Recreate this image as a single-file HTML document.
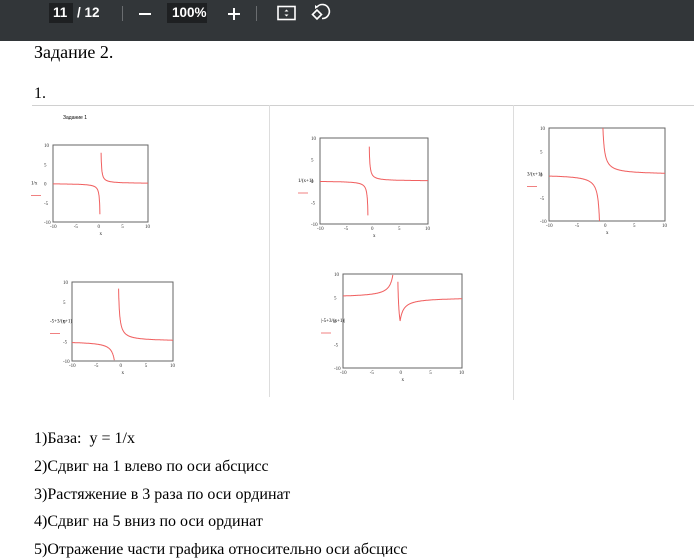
<!DOCTYPE html>
<html><head><meta charset="utf-8"><style>
body{margin:0;width:694px;height:552px;overflow:hidden;background:#fff;position:relative;font-family:"Liberation Serif",serif;}
#bar{position:absolute;left:0;top:0;width:694px;height:41px;background:#323639;}
.t{position:absolute;color:#fff;font-family:"Liberation Sans",sans-serif;font-size:13.5px;font-weight:bold;}
.p{position:absolute;font-size:16px;color:#000;white-space:nowrap;}
</style></head><body>
<div id="bar">
 <div style="position:absolute;left:49px;top:3px;width:24px;height:20px;background:#1e2022"></div>
 <div class="t" style="left:53px;top:5px">11</div>
 <div class="t" style="left:77px;top:5px">/ 12</div>
 <div style="position:absolute;left:122px;top:6px;width:1px;height:15px;background:#6a6d70"></div>
 <div style="position:absolute;left:139px;top:13px;width:12px;height:2px;background:#fff"></div>
 <div style="position:absolute;left:167px;top:3px;width:40px;height:20px;background:#1e2022"></div>
 <div class="t" style="left:172px;top:5px">100%</div>
 <div style="position:absolute;left:228px;top:13px;width:12px;height:2px;background:#fff"></div>
 <div style="position:absolute;left:233px;top:8px;width:2px;height:12px;background:#fff"></div>
 <div style="position:absolute;left:256px;top:6px;width:1px;height:15px;background:#6a6d70"></div>
 <svg style="position:absolute;left:276px;top:3px" width="60" height="22" viewBox="0 0 60 22">
  <rect x="2" y="3.5" width="17" height="13" fill="none" stroke="#fff" stroke-width="1.6"/>
  <path d="M10.5 6.5l-2 2h4zM10.5 13.5l-2-2h4z" fill="#fff"/>
  <path d="M41 7l-4.5 4.5 4.5 4.5 4.5-4.5z" fill="none" stroke="#fff" stroke-width="1.6"/>
  <path d="M41 4a7 7 0 1 1 5 11.5" fill="none" stroke="#fff" stroke-width="1.6"/>
  <path d="M39 2l3 2-3 2z" fill="#fff"/>
 </svg>
</div>
<div class="p" style="left:34px;top:42px;font-size:18px">Задание 2.</div>
<div class="p" style="left:34px;top:85px">1.</div>
<svg id="g" style="position:absolute;left:0;top:0" width="694" height="552">
 <line x1="32" y1="105.5" x2="694" y2="105.5" stroke="#d0d0d0"/>
 <line x1="269.5" y1="105" x2="269.5" y2="397" stroke="#ddd"/>
 <line x1="513.5" y1="105" x2="513.5" y2="400" stroke="#ddd"/>
 <text x="63" y="119" font-size="5" font-family="Liberation Sans">Задание 1</text>
</svg>
<div class="p" style="left:34px;top:430px">1)База:&nbsp; y = 1/x</div>
<div class="p" style="left:34px;top:458px">2)Сдвиг на 1 влево по оси абсцисс</div>
<div class="p" style="left:34px;top:486px">3)Растяжение в 3 раза по оси ординат</div>
<div class="p" style="left:34px;top:513px">4)Сдвиг на 5 вниз по оси ординат</div>
<div class="p" style="left:34px;top:541px">5)Отражение части графика относительно оси абсцисс</div>
<script>
var g=document.getElementById('g'),NS='http://www.w3.org/2000/svg';
function el(n,a){var e=document.createElementNS(NS,n);for(var k in a)e.setAttribute(k,a[k]);g.appendChild(e);return e;}
function plot(x0,x1,y0,y1,f,lab){
 el('rect',{x:x0,y:y0,width:x1-x0,height:y1-y0,fill:'none',stroke:'#666','stroke-width':1});
 var sx=function(v){return x0+(v+10)/20*(x1-x0)},sy=function(v){return y1-(v+10)/20*(y1-y0)};
 var d='',pen=false;
 for(var i=0;i<=800;i++){var x=-10+i*20/800,y=f(x);
  if(!isFinite(y)||y>10||y<-10){pen=false;continue;}
  d+=(pen?'L':'M')+sx(x).toFixed(1)+' '+sy(y).toFixed(1);pen=true;}
 el('path',{d:d,fill:'none',stroke:'#f06060','stroke-width':1});
 [-10,-5,0,5,10].forEach(function(v){
  el('text',{x:sx(v)-3,y:y1+6,'font-size':5,'font-family':'Liberation Serif',fill:'#333'}).textContent=v;
  el('text',{x:x0-9,y:sy(v)+2,'font-size':5,'font-family':'Liberation Serif',fill:'#333'}).textContent=v;});
 el('text',{x:(x0+x1)/2-1,y:y1+13,'font-size':5,'font-family':'Liberation Serif'}).textContent='x';
 el('text',{x:x0-22,y:(y0+y1)/2+1,'font-size':5,'font-family':'Liberation Serif'}).textContent=lab;
 el('line',{x1:x0-22,y1:(y0+y1)/2+12,x2:x0-12,y2:(y0+y1)/2+12,stroke:'#f08080'});
}
plot(53,148,145,222,function(x){return 1/x},'1/x');
plot(320,428,138,224,function(x){return 1/(x+1)},'1/(x+1)');
plot(549,665,128,221,function(x){return 3/(x+1)},'3/(x+1)');
plot(72,173,282,361,function(x){return -5+3/(x+1)},'-5+3/(x+1)');
plot(343,462,274,368,function(x){return Math.abs(-5+3/(x+1))},'|-5+3/(x+1)|');
</script>
</body></html>
